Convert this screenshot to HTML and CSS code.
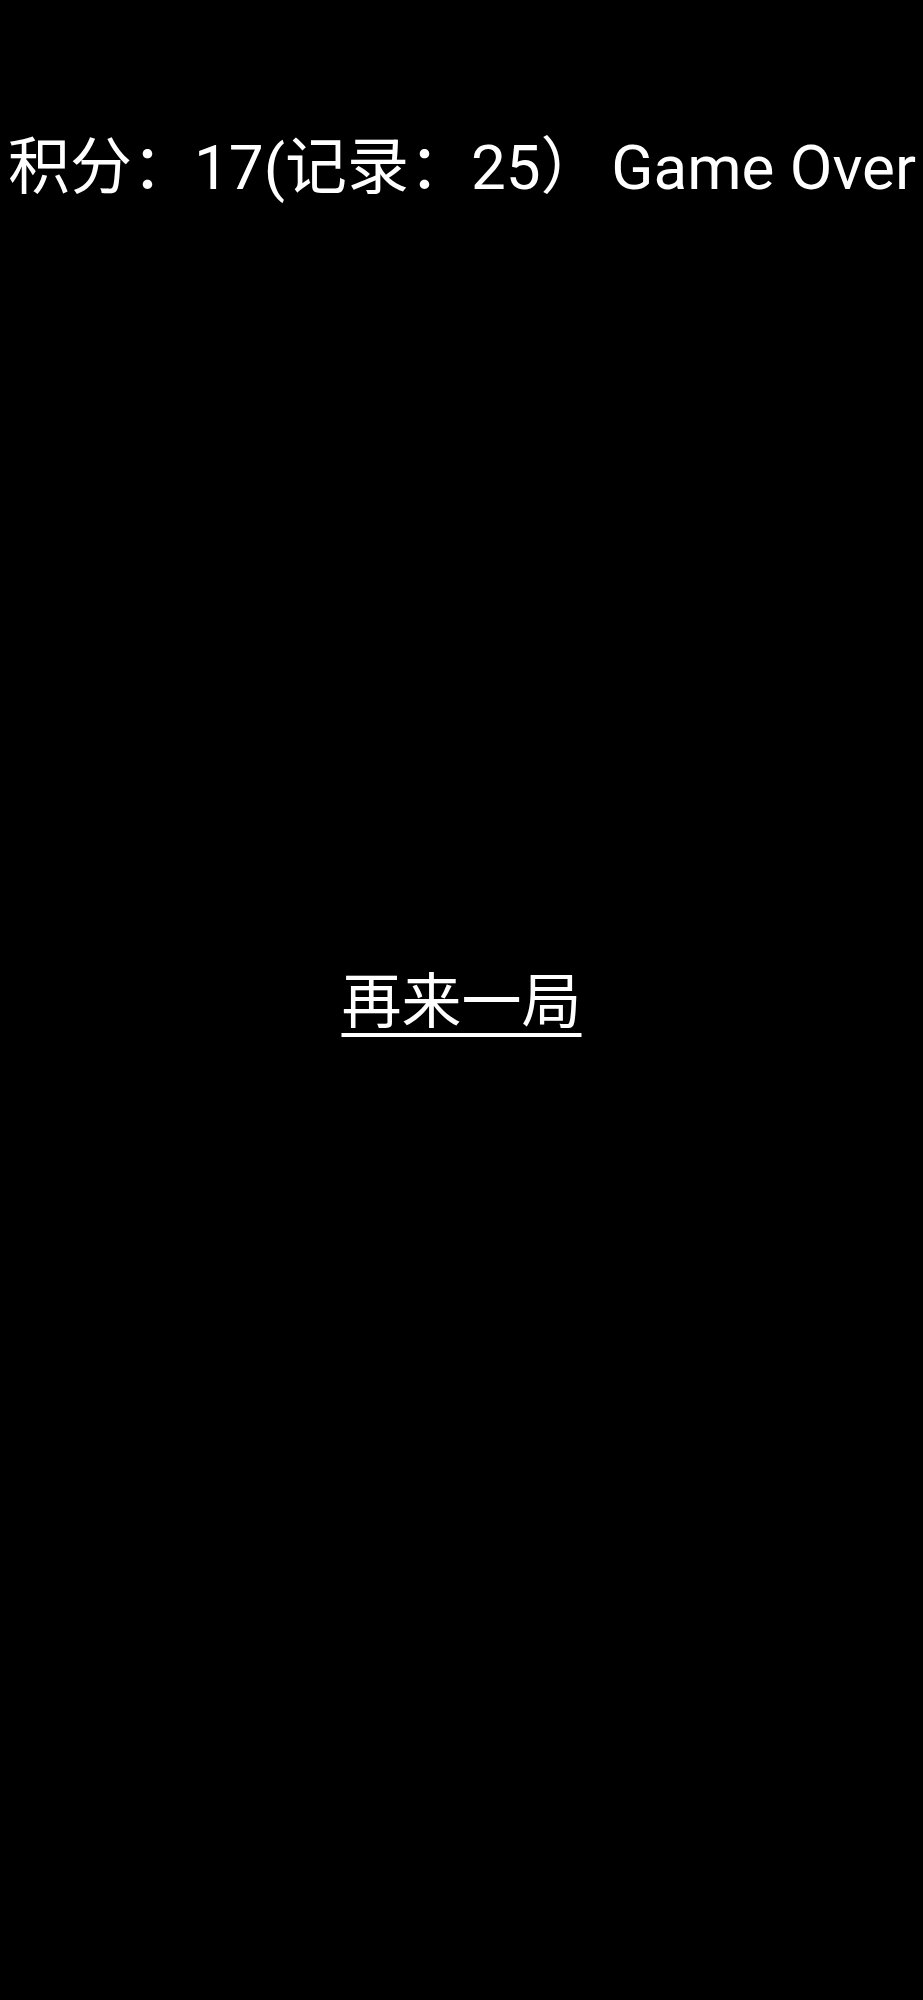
FILE: index.html
```html
<!DOCTYPE html>
<html lang="zh-CN">
<head>
<meta charset="utf-8">
<title>Game Over</title>
<link rel="stylesheet" href="styles.css">
</head>
<body>
<div class="page">
  <div class="status">
    <span class="score">积分：17(记录：25）</span>
    <span class="state">Game Over</span>
  </div>
  <div class="center">
    <a class="restart" href="#">再来一局</a>
  </div>
</div>
</body>
</html>
```
FILE: styles.css
```css
html, body {
  margin: 0;
  padding: 0;
  background: #000;
}
body {
  color: #fff;
  font-family: Roboto, "Noto Sans CJK SC", sans-serif;
}
.page {
  height: 2000px;
  display: flex;
  flex-direction: column;
}
.status {
  display: flex;
  justify-content: space-between;
  align-items: center;
  padding: 132px 7px 0 8px;
  font-size: 62px;
  line-height: 72px;
  white-space: nowrap;
}
.center {
  margin-top: 759px;
  display: flex;
  justify-content: center;
}
.restart {
  color: #fff;
  font-size: 60px;
  line-height: 80px;
  text-decoration: underline;
  text-decoration-thickness: 4px;
  text-underline-offset: 10px;
}
```
